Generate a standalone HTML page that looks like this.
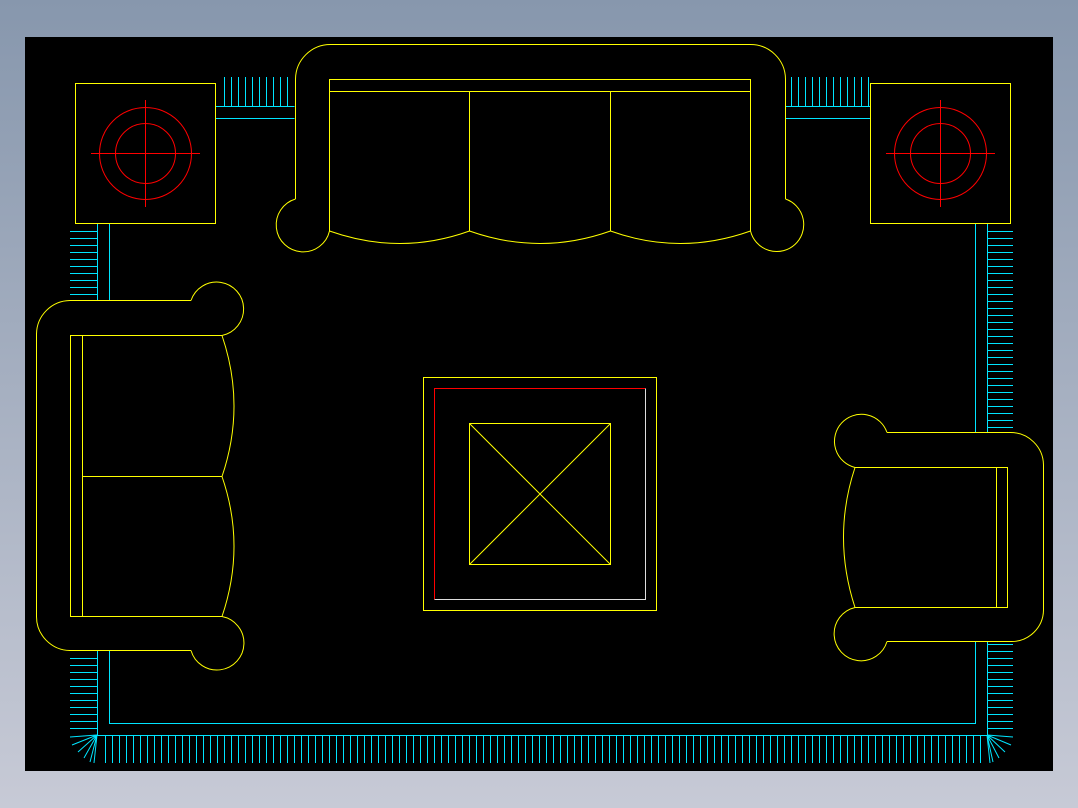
<!DOCTYPE html>
<html><head><meta charset="utf-8"><style>
html,body{margin:0;padding:0;width:1078px;height:808px;overflow:hidden;background:linear-gradient(#8797ad,#c7cad6);}
svg{position:absolute;left:0;top:0}
</style></head><body>
<svg width="1078" height="808" viewBox="0 0 1078 808" xmlns="http://www.w3.org/2000/svg">
<defs>
<pattern id="fv" width="7" height="40" patternUnits="userSpaceOnUse" x="0" y="0"><rect x="0" y="0" width="1" height="40" fill="#00e5ff" shape-rendering="crispEdges"/></pattern>
<pattern id="fh" width="40" height="7" patternUnits="userSpaceOnUse" x="0" y="0"><rect x="0" y="0" width="40" height="1" fill="#00e5ff" shape-rendering="crispEdges"/></pattern>
</defs>
<rect x="25" y="37" width="1028" height="734" fill="#000"/>
<g fill="none" stroke-width="1">
<g shape-rendering="crispEdges">
<rect x="220" y="77" width="74" height="29" fill="url(#fv)" stroke="none"/>
<rect x="787" y="77" width="83" height="29" fill="url(#fv)" stroke="none"/>
<rect x="100" y="735" width="887" height="28" fill="url(#fv)" stroke="none"/>
<rect x="70" y="227" width="27" height="73" fill="url(#fh)" stroke="none"/>
<rect x="70" y="653" width="27" height="80" fill="url(#fh)" stroke="none"/>
<rect x="987" y="227" width="26" height="205" fill="url(#fh)" stroke="none"/>
<rect x="987" y="643" width="26" height="90" fill="url(#fh)" stroke="none"/>
<g stroke="#00e5ff">
<path d="M215.5 106.5H294.5M215.5 118.5H294.5M785.5 106.5H870.5M785.5 118.5H870.5"/>
<path d="M97.5 224V300M109.5 224V300M97.5 650V735.5H987.5V641M109.5 650V723.5H975.5V641M975.5 224V432M987.5 224V432"/>
</g>
</g>
<g stroke="#00e5ff">
<path d="M97 735L70 737M97 735L72 745M97 735L78 752M97 735L84 758M97 735L90 762M97 735L94 763"/>
<path d="M987 735L1013 737M987 735L1011 745M987 735L1005 752M987 735L999 758M987 735L993 762M987 735L990 763"/>
</g>
<g stroke="#ffff00">
<rect x="75.5" y="83.5" width="140" height="140" shape-rendering="crispEdges"/>
<rect x="870.5" y="83.5" width="140" height="140" shape-rendering="crispEdges"/>
<path d="M295.5 199V79A35 35 0 0 1 330.5 44.5H750.5A35 35 0 0 1 785.5 79V199"/>
<path d="M295.5 199A27 27 0 1 0 329.5 231"/>
<path d="M785.5 199A27 27 0 1 1 750.5 231"/>
<path d="M329.5 231V79.5H750.5V231M329.5 91.5H750.5M469.5 91.5V231M610.5 91.5V231" shape-rendering="crispEdges"/>
<path d="M329.5 231Q400 256 469.5 231Q540 256 610.5 231Q680 256 750.5 231"/>
<path d="M191 300.5H70A34 34 0 0 0 36.5 334V616A34 34 0 0 0 70 650.5H191"/>
<path d="M191 300.5A27 27 0 1 1 222 335.5"/>
<path d="M191 650.5A27 27 0 1 0 222 616.5"/>
<path d="M222 335.5H70.5V616.5H222M82.5 335.5V616.5M82.5 476.5H222" shape-rendering="crispEdges"/>
<path d="M222 335.5Q246 406 222 476.5Q246 546 222 616.5"/>
<path d="M887 432.5H1010A33 33 0 0 1 1043.5 465V610A32 32 0 0 1 1011 641.5H887"/>
<path d="M887 432.5A27 27 0 1 0 855 467.5"/>
<path d="M887 641.5A27 27 0 1 1 855 607.5"/>
<path d="M855 467.5H1007.5V607.5H855M996.5 467.5V607.5" shape-rendering="crispEdges"/>
<path d="M855 467.5Q832 537 855 607.5"/>
<rect x="423.5" y="377.5" width="233" height="233" shape-rendering="crispEdges"/>
<rect x="469.5" y="423.5" width="141" height="141" shape-rendering="crispEdges"/>
<path d="M469.5 423.5L610.5 564.5M610.5 423.5L469.5 564.5"/>
</g>
<g stroke="#ff0000">
<path d="M645.5 388.5H434.5V599.5" shape-rendering="crispEdges"/>
<circle cx="145.5" cy="153.5" r="46"/><circle cx="145.5" cy="153.5" r="30"/>
<path d="M91 153.5H200M145.5 100V207" shape-rendering="crispEdges"/>
<circle cx="940.5" cy="153.5" r="46"/><circle cx="940.5" cy="153.5" r="30"/>
<path d="M886 153.5H995M940.5 100V207" shape-rendering="crispEdges"/>
</g>
<path d="M434.5 599.5H645.5V388.5" stroke="#ddd" shape-rendering="crispEdges"/>
</g>
</svg>
</body></html>
